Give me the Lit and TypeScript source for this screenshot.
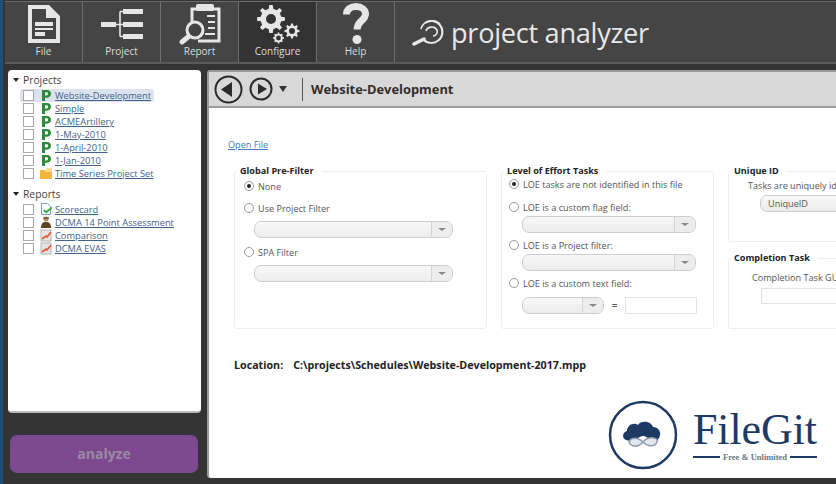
import { LitElement, css, html, svg } from 'lit';
import { customElement } from 'lit/decorators.js';

// toothed ring for the Configure icon, hole is cut with evenodd
function gearPath(cx: number, cy: number, outer: number, inner: number, hole: number, teeth: number): string {
  const pts: string[] = [];
  const step = (Math.PI * 2) / teeth;
  for (let i = 0; i < teeth; i++) {
    const a = i * step;
    const corners: Array<[number, number]> = [
      [a - step * 0.28, inner],
      [a - step * 0.16, outer],
      [a + step * 0.16, outer],
      [a + step * 0.28, inner]
    ];
    for (const [ang, r] of corners) {
      pts.push(`${(cx + Math.cos(ang) * r).toFixed(2)} ${(cy + Math.sin(ang) * r).toFixed(2)}`);
    }
  }
  return `M${pts.join('L')}Z M${cx - hole} ${cy}a${hole} ${hole} 0 1 0 ${hole * 2} 0a${hole} ${hole} 0 1 0 ${-hole * 2} 0Z`;
}

const fileIcon = html`<svg width="34" height="40" viewBox="0 0 34 40">
  <path fill="#e6e6e6" fill-rule="evenodd" d="M1 1h21l11 11v27H1ZM5 5v30h24V14h-10V5Z"/>
  <path fill="#e6e6e6" d="M8 18h18v4H8zM8 24h18v2H8zM8 28h10v4H8z"/>
</svg>`;

const projectIcon = html`<svg width="44" height="40" viewBox="0 0 44 40">
  <g fill="#e6e6e6">
    <rect x="1" y="18" width="15" height="5"/>
    <rect x="23" y="5" width="20" height="5"/>
    <rect x="23" y="18" width="20" height="5"/>
    <rect x="23" y="30" width="20" height="5"/>
  </g>
  <path d="M16 20.5h7M20 7.5v25M20 7.5h3M20 32.5h3" stroke="#e6e6e6" fill="none" stroke-width="1.6"/>
</svg>`;

const reportIcon = html`<svg width="44" height="42" viewBox="0 0 44 42">
  <path fill="none" stroke="#e6e6e6" stroke-width="3" d="M14 22V6H41V38H20"/>
  <rect x="18" y="1" width="18" height="7" rx="2" fill="#e6e6e6"/>
  <path stroke="#e6e6e6" stroke-width="2" d="M29 13h8M30 19h7M30 25h7M27 31h10"/>
  <circle cx="17" cy="27" r="8" fill="#454545" stroke="#e6e6e6" stroke-width="3"/>
  <path stroke="#e6e6e6" stroke-width="5" stroke-linecap="round" d="M10 34 4 39"/>
</svg>`;

const configureIcon = html`<svg width="44" height="42" viewBox="0 0 44 42">
  <path fill="#e6e6e6" fill-rule="evenodd" d=${gearPath(15, 16, 14, 10.5, 5, 8)}/>
  <path fill="#e6e6e6" fill-rule="evenodd" d=${gearPath(36, 28, 7.5, 5.6, 3, 8)}/>
  <path fill="#e6e6e6" fill-rule="evenodd" d=${gearPath(22.5, 35, 5.5, 4.3, 2.4, 8)}/>
</svg>`;

const helpIcon = html`<svg width="28" height="42" viewBox="0 0 28 42">
  <path fill="none" stroke="#e6e6e6" stroke-width="7" d="M4.5 11.5C4.5 6.5 9 3.5 14 3.5c5.500 0 9.500 3.200 9.500 7.500 0 7-8.500 6.500-8.500 15.500"/>
  <circle cx="15" cy="36.500" r="4.500" fill="#e6e6e6"/>
</svg>`;

const pIcon = svg`<path fill="#2f8a3f" fill-rule="evenodd" d="M2 1h5c2.500 0 4 1.500 4 3.800S9.500 8.700 7 8.700H5V12H2ZM5 3.300v3.100h1.600c1 0 1.500-.6 1.500-1.600S7.600 3.300 6.600 3.300Z"/>`;
const setIcon = svg`<path fill="#f2b63c" d="M0 3h5l1 1.500h6V12H0Z"/><path fill="#fbe08c" d="M6 1h6v3H6z"/>`;
const scoreIcon = svg`<path fill="#fff" stroke="#7b9cc4" d="M1.500.500h6l3 3v8h-9z"/><path fill="none" stroke="#2fb344" stroke-width="2" d="M4 7l2.200 2.200L12 4.500"/>`;
const personIcon = svg`<circle cx="6" cy="3" r="2.500" fill="#b98a5e"/><path fill="#5c4526" d="M1 12c0-5 2-6 5-6s5 1 5 6Z"/><path fill="#3d2e18" d="M3 1.500h6v1H3z"/>`;
const chartIcon = svg`<rect x="1" y="1" width="10" height="11" fill="#e4e4e4" stroke="#b5b5b5"/><path fill="none" stroke="#e5562f" stroke-width="1.600" d="M2 10 6 7l1 1 4-5"/>`;

const projects = [
  { label: 'Website-Development', icon: pIcon, selected: true },
  { label: 'Simple', icon: pIcon },
  { label: 'ACMEArtillery', icon: pIcon },
  { label: '1-May-2010', icon: pIcon },
  { label: '1-April-2010', icon: pIcon },
  { label: '1-Jan-2010', icon: pIcon },
  { label: 'Time Series Project Set', icon: setIcon }
];

const reports = [
  { label: 'Scorecard', icon: scoreIcon },
  { label: 'DCMA 14 Point Assessment', icon: personIcon },
  { label: 'Comparison', icon: chartIcon },
  { label: 'DCMA EVAS', icon: chartIcon }
];

@customElement('app-root')
export class AppRoot extends LitElement {
  public static override styles = css`
    :host {
      display: block;
      width: 836px;
      height: 484px;
      overflow: hidden;
      position: relative;
      background: #343434;
      font-family: 'Open Sans', 'Liberation Sans', sans-serif;
      font-size: 9.1px;
      color: #3c3c3c;
      box-sizing: border-box;
      border-left: 3px solid #1f4f78;
    }

    .toolbar {
      display: flex;
      align-items: stretch;
      height: 60px;
      margin: 1px 0 0 2px;
      background: #454545;
      border-top: 1px solid #6a6a6a;
      border-bottom: 2px solid #5a5a5a;
      box-sizing: content-box;
    }

    .tool {
      width: 78px;
      box-sizing: border-box;
      border-right: 1px solid #6e6e6e;
      display: flex;
      flex-direction: column;
      align-items: center;
      justify-content: flex-end;
      color: #dcdcdc;
      font-size: 10px;
      line-height: 14px;
      padding-bottom: 4px;
    }

    .tool.active {
      background: #333;
    }

    .tool .glyph {
      height: 40px;
      display: flex;
      align-items: center;
      justify-content: center;
    }

    .brand {
      display: flex;
      align-items: center;
      gap: 5px;
      margin-left: 17px;
      color: #e8e8e8;
      font-size: 27.2px;
      font-weight: 400;
      letter-spacing: -0.3px;
    }

    .content {
      display: flex;
      gap: 6px;
      padding: 6px 0 0 5px;
    }

    .side {
      width: 193px;
      flex: none;
    }

    .tree {
      height: 343px;
      box-sizing: border-box;
      background: #fff;
      border-radius: 4px;
      border-bottom: 2px solid #bbb;
      padding: 3px 0 0 5px;
    }

    .heading {
      display: flex;
      align-items: center;
      gap: 4px;
      font-size: 10.3px;
      line-height: 14px;
      color: #444;
    }

    .heading::before {
      content: '';
      border: 3px solid transparent;
      border-top: 4px solid #222;
      border-bottom: 0;
    }

    .rows {
      margin: 2px 0 7px;
    }

    .row {
      display: flex;
      align-items: center;
      width: fit-content;
      height: 13px;
      margin-left: 7px;
      padding: 0 3px;
      border-radius: 3px;
    }

    .row.selected {
      background: #dbe4ee;
    }

    .check {
      width: 11px;
      height: 11px;
      box-sizing: border-box;
      background: #fff;
      border: 1px solid #a8a8a8;
      flex: none;
    }

    .row svg {
      margin-left: 6px;
      flex: none;
    }

    .row a {
      margin-left: 3px;
      font-size: 9.3px;
      color: #44618c;
      text-decoration: underline;
      white-space: nowrap;
    }

    .analyze {
      margin: 22px 3px 0 2px;
      height: 38px;
      box-sizing: border-box;
      padding-bottom: 2px;
      border-radius: 7px;
      background: #7c488f;
      color: #9a8aa6;
      font-size: 14px;
      font-weight: 700;
      display: flex;
      align-items: center;
      justify-content: center;
    }

    .main {
      width: 640px;
      height: 408px;
      flex: none;
      background: #fff;
      border: 1px solid #9a9a9a;
      border-width: 2px 0 0 2px;
      border-radius: 3px 0 0 3px;
      box-sizing: border-box;
      overflow: hidden;
    }

    .header {
      height: 34px;
      display: flex;
      align-items: center;
      background: #d8d8d8;
      border-bottom: 2px solid #9c9c9c;
      padding-left: 5px;
      box-sizing: content-box;
    }

    .nav {
      display: flex;
      align-items: center;
      gap: 6px;
      padding-right: 15px;
    }

    .header .arrow {
      border: 4px solid transparent;
      border-top: 6px solid #333;
      border-bottom: 0;
    }

    .header h1 {
      margin: 0;
      padding-left: 8px;
      border-left: 1px solid #555;
      font-size: 12.9px;
      font-weight: 700;
      line-height: 23px;
      color: #2f2f2f;
    }

    .body {
      padding: 30px 0 0 19px;
    }

    .open {
      color: #4a78bd;
      text-decoration: underline;
      line-height: 14px;
      display: block;
    }

    .groups {
      display: grid;
      grid-template-columns: 253px 213px 180px;
      gap: 14px;
      margin: 12px 0 0 6px;
      height: 165px;
    }

    .stack {
      display: grid;
      grid-template-rows: 78px 78px;
      gap: 9px;
    }

    fieldset {
      margin: 0;
      padding: 0;
      min-width: 0;
      border: 1px solid #eee;
      border-radius: 3px;
      color: #555;
    }

    legend {
      margin-left: 2px;
      padding: 0 8px 0 3px;
      font-weight: 700;
      font-size: 9.1px;
      line-height: 14px;
      color: #222;
    }

    .global {
      padding: 1px 0 0 9px;
    }

    .global legend {
      margin-left: -7px;
    }

    .effort {
      padding: 0 0 0 7px;
    }

    .effort legend {
      margin-left: -5px;
    }

    .effort .opt:first-of-type {
      margin-top: -1px;
    }

    .opt {
      display: flex;
      align-items: center;
      gap: 4px;
      height: 14px;
    }

    .spacer {
      height: 8px;
    }

    .radio {
      width: 10px;
      height: 10px;
      box-sizing: border-box;
      border: 1px solid #999;
      border-radius: 50%;
      display: flex;
      align-items: center;
      justify-content: center;
      background: #fff;
    }

    .radio.on::after {
      content: '';
      width: 4px;
      height: 4px;
      border-radius: 50%;
      background: #222;
    }

    .combo {
      height: 17px;
      box-sizing: border-box;
      display: flex;
      border: 1px solid #cdcdcd;
      border-radius: 7px;
      background: linear-gradient(#f8f8f8, #ececec);
      overflow: hidden;
      color: #555;
      line-height: 15px;
    }

    .combo span {
      flex: 1;
      padding-left: 7px;
    }

    .combo i {
      width: 20px;
      border-left: 1px solid #d4d4d4;
      display: flex;
      align-items: center;
      justify-content: center;
      background: #ededed;
    }

    .combo i::after {
      content: '';
      border: 4px solid transparent;
      border-top: 3px solid #888;
      border-bottom: 0;
    }

    .global .combo {
      width: 199px;
      margin: 6px 0 7px 10px;
    }

    .effort .combo {
      width: 174px;
      margin: 2px 0 5px 13px;
    }

    .effort .opt + .opt {
      margin-top: 9px;
    }

    .inline {
      display: flex;
      align-items: center;
      margin: 7px 0 0 13px;
    }

    .effort .inline .combo {
      width: 82px;
      margin: 0;
    }

    .inline b {
      margin: 0 8px;
      font-weight: 700;
      color: #555;
    }

    .box {
      height: 17px;
      box-sizing: border-box;
      border: 1px solid #e2e2e2;
      background: #fff;
    }

    .inline .box {
      width: 72px;
    }

    .indent {
      white-space: nowrap;
      line-height: 14px;
    }

    .unique .indent {
      padding-left: 19px;
      margin-top: 1px;
    }

    .unique .combo {
      margin: 2px 0 0 31px;
    }

    .finish .indent {
      padding-left: 23px;
      margin-top: 6px;
    }

    .finish .box {
      margin: 3px 0 0 32px;
      height: 16px;
    }

    .location {
      margin: 29px 0 0 6px;
      font-weight: 700;
      font-size: 10.7px;
      line-height: 14px;
      color: #222;
      display: flex;
      gap: 10px;
    }

    .watermark {
      position: absolute;
      left: 605px;
      top: 400px;
      display: flex;
      align-items: center;
      gap: 15px;
      color: #1d3a63;
      background: #fff;
      padding: 0 16px 0 0;
    }

    .mark-text {
      width: 124px;
      font-family: 'Liberation Serif', serif;
    }

    .mark-name {
      font-size: 44px;
      line-height: 42px;
      letter-spacing: -0.1px;
      white-space: nowrap;
    }

    .mark-tag {
      display: flex;
      align-items: center;
      gap: 3px;
      margin-top: 2px;
      font-size: 8.5px;
      font-weight: 700;
      line-height: 9px;
      white-space: nowrap;
      color: #6a7689;
    }

    .mark-tag::before,
    .mark-tag::after {
      content: '';
      flex: 1;
      height: 2px;
      background: #1d3a63;
    }
  `;

  private renderRow(item: { label: string; icon: unknown; selected?: boolean }) {
    return html`<div class="row ${item.selected ? 'selected' : ''}">
      <span class="check"></span>
      <svg width="12" height="13" viewBox="0 0 12 13">${item.icon}</svg>
      <a>${item.label}</a>
    </div>`;
  }

  private renderOpt(label: string, on = false) {
    return html`<div class="opt"><span class="radio ${on ? 'on' : ''}"></span>${label}</div>`;
  }

  private renderCombo(value = '') {
    return html`<div class="combo"><span>${value}</span><i></i></div>`;
  }

  public override render() {
    return html`
      <div class="toolbar">
        <div class="tool"><div class="glyph">${fileIcon}</div>File</div>
        <div class="tool"><div class="glyph">${projectIcon}</div>Project</div>
        <div class="tool"><div class="glyph">${reportIcon}</div>Report</div>
        <div class="tool active"><div class="glyph">${configureIcon}</div>Configure</div>
        <div class="tool"><div class="glyph">${helpIcon}</div>Help</div>
        <div class="brand">
          <svg width="34" height="34" viewBox="0 0 34 34">
            <g fill="none" stroke="#e8e8e8" stroke-width="2">
              <path d="M11 24A11 11 0 1 0 13 8"/>
              <path d="M9 14C11 6 21 3 28 9M14 16c1-4 8-6 11-1 1 3-1 6-4 6" stroke-width="1.700"/>
            </g>
            <path stroke="#e8e8e8" stroke-width="3.500" stroke-linecap="round" d="M12 24 2 29"/>
          </svg>
          project analyzer
        </div>
      </div>
      <div class="content">
        <div class="side">
          <div class="tree">
            <div class="heading">Projects</div>
            <div class="rows">${projects.map(p => this.renderRow(p))}</div>
            <div class="heading">Reports</div>
            <div class="rows">${reports.map(r => this.renderRow(r))}</div>
          </div>
          <div class="analyze">analyze</div>
        </div>
        <div class="main">
          <div class="header">
            <div class="nav">
              <svg width="29" height="29" viewBox="0 0 29 29">
                <circle cx="14.500" cy="14.500" r="13" fill="none" stroke="#2b2b2b" stroke-width="2"/>
                <path fill="#2b2b2b" d="M7 14.500 18 7v15Z"/>
              </svg>
              <svg width="24" height="24" viewBox="0 0 24 24">
                <circle cx="12" cy="12" r="10.500" fill="none" stroke="#2b2b2b" stroke-width="2"/>
                <path fill="#2b2b2b" d="M18 12 9 6.500v11Z"/>
              </svg>
              <span class="arrow"></span>
            </div>
            <h1>Website-Development</h1>
          </div>
          <div class="body">
            <a class="open">Open File</a>
            <div class="groups">
              <fieldset class="global">
                <legend>Global Pre-Filter</legend>
                ${this.renderOpt('None', true)}
                <div class="spacer"></div>
                ${this.renderOpt('Use Project Filter')}
                ${this.renderCombo()}
                ${this.renderOpt('SPA Filter')}
                ${this.renderCombo()}
              </fieldset>
              <fieldset class="effort">
                <legend>Level of Effort Tasks</legend>
                ${this.renderOpt('LOE tasks are not identified in this file', true)}
                ${this.renderOpt('LOE is a custom flag field:')}
                ${this.renderCombo()}
                ${this.renderOpt('LOE is a Project filter:')}
                ${this.renderCombo()}
                ${this.renderOpt('LOE is a custom text field:')}
                <div class="inline">${this.renderCombo()}<b>=</b><div class="box"></div></div>
              </fieldset>
              <div class="stack">
                <fieldset class="unique">
                  <legend>Unique ID</legend>
                  <div class="indent">Tasks are uniquely ide</div>
                  ${this.renderCombo('UniqueID')}
                </fieldset>
                <fieldset class="finish">
                  <legend>Completion Task</legend>
                  <div class="indent">Completion Task GU</div>
                  <div class="box"></div>
                </fieldset>
              </div>
            </div>
            <div class="location">
              <span>Location:</span>
              <span>C:\\projects\\Schedules\\Website-Development-2017.mpp</span>
            </div>
          </div>
        </div>
      </div>
      <div class="watermark">
        <svg width="70" height="70" viewBox="0 0 70 70">
          <circle cx="35" cy="35" r="33" fill="#fff" stroke="#1d3a63" stroke-width="2.500"/>
          <path fill="#1d3a63" d="M18 40c-4-1-4-8 1-9 0-6 7-9 11-6 3-5 13-4 15 2 6 0 9 6 6 11-1 2-3 3-5 3-4 0-7-5-11-5s-7 5-12 5c-2 0-4-1-5-1Z"/>
          <path fill="#e4e8ee" stroke="#8b9bb0" stroke-width="1.500" d="M21 42c2-5 9-5 14 0s12 5 14 0-9-6-14 0-12 5-14 0Z"/>
        </svg>
        <div class="mark-text">
          <div class="mark-name">FileGit</div>
          <div class="mark-tag">Free &amp; Unlimited</div>
        </div>
      </div>
    `;
  }
}
